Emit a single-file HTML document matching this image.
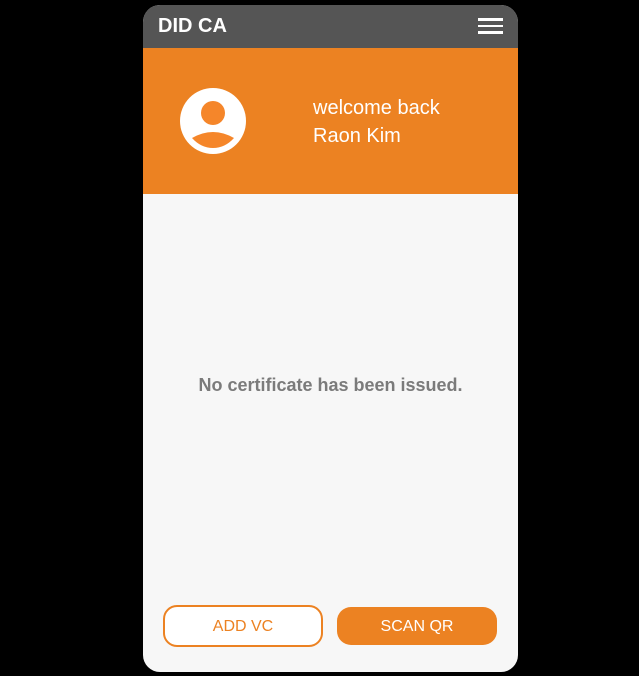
<!DOCTYPE html>
<html><head><style>
body{margin:0;background:#000;width:639px;height:676px;overflow:hidden;font-family:"Liberation Sans",Arial,sans-serif;}
.ph{position:absolute;left:143px;top:5px;width:375px;height:667px;border-radius:17px;background:#f7f7f7;overflow:hidden;}
.hd{position:absolute;left:0;top:0;width:375px;height:43px;background:#555;}
.hd .t{position:absolute;left:15px;top:10px;color:#fff;font-weight:bold;font-size:20px;}
.hb{position:absolute;left:335px;width:25px;height:2.5px;background:#fff;}
.or{position:absolute;left:0;top:43px;width:375px;height:146px;background:#ec8222;}
.w{position:absolute;left:170px;color:#fff;font-size:20px;}
.msg{position:absolute;left:0;width:375px;top:370px;text-align:center;color:#7b7b7b;font-weight:bold;font-size:18px;}
.b{position:absolute;box-sizing:border-box;display:flex;align-items:center;justify-content:center;font-size:16px;border-radius:14px;padding-top:2px;}
</style></head><body>
<div class="ph">
<div class="hd"><div class="t">DID CA</div>
<div class="hb" style="top:13px"></div><div class="hb" style="top:19.5px"></div><div class="hb" style="top:26px"></div></div>
<div class="or">
<svg style="position:absolute;left:37px;top:40px" width="66" height="66" viewBox="0 0 66 66">
<circle cx="33" cy="33" r="33" fill="#fff"/>
<circle cx="33" cy="25" r="12" fill="#f5862a"/>
<path d="M12 50 Q33 38 54 50 Q45 60 33 60 Q21 60 12 50Z" fill="#f5862a"/>
</svg>
<div class="w" style="top:49px">welcome back</div>
<div class="w" style="top:77px">Raon Kim</div>
</div>
<div class="msg">No certificate has been issued.</div>
<div class="b" style="left:20px;top:600px;width:160px;height:42px;border:2px solid #ec8222;background:#fff;color:#ec8222">ADD VC</div>
<div class="b" style="left:194px;top:602px;width:160px;height:38px;background:#ec8222;color:#fff">SCAN QR</div>
</div>
</body></html>
